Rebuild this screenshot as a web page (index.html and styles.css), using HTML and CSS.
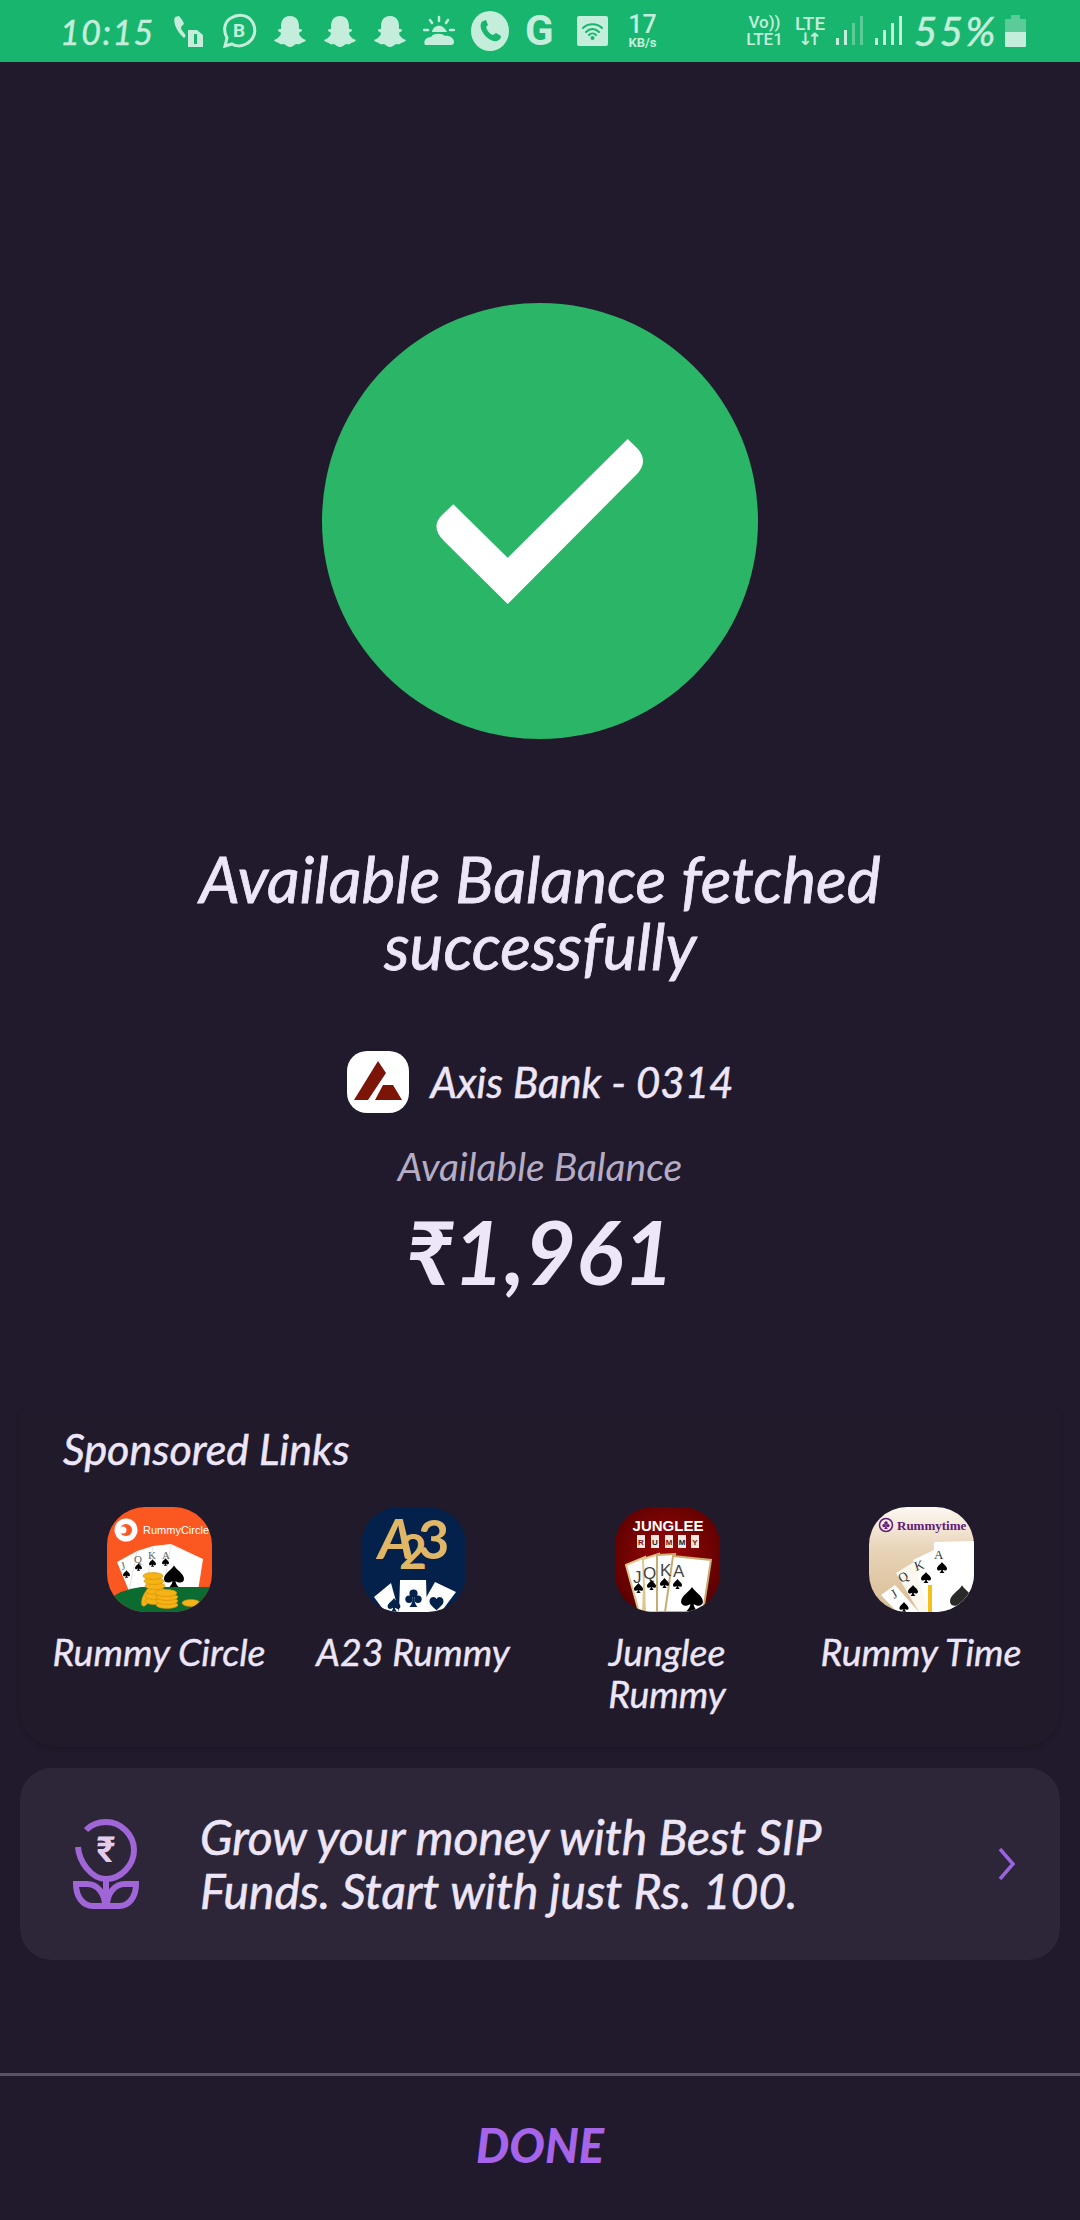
FILE: index.html
```html
<!DOCTYPE html>
<html lang="en">
<head>
<meta charset="utf-8">
<title>Available Balance</title>
<link rel="stylesheet" href="styles.css">
</head>
<body>
<svg class="defs" width="0" height="0" aria-hidden="true">
  <symbol id="spade" viewBox="0 0 20 22"><path d="M10 0C7 5 0 8 0 13.500C0 17 4.500 18.500 8.500 15.500C8.300 18 7 20 5 22H15C13 20 11.700 18 11.500 15.500C15.500 18.500 20 17 20 13.500C20 8 13 5 10 0Z"/></symbol>
  <symbol id="club" viewBox="0 0 20 22"><circle cx="10" cy="5.500" r="5"/><circle cx="4.500" cy="12.500" r="4.500"/><circle cx="15.500" cy="12.500" r="4.500"/><path d="M9 8H11C11 15 12 19 15 22H5C8 19 9 15 9 8Z"/></symbol>
  <symbol id="heart" viewBox="0 0 20 20"><path d="M10 19C5 14 0 11 0 6C0 2 3 0 5.500 0C7.500 0 9 1 10 3C11 1 12.500 0 14.500 0C17 0 20 2 20 6C20 11 15 14 10 19Z"/></symbol>
  <symbol id="ghost" viewBox="0 0 34 32"><path d="M17 1C10 1 8 6 8 12V14C6 14 5 14 5 15C5 17 8 17 8 18C8 21 4 24 1 25C2 27 4 27 6 28C7 30 9 29 11 29C13 30 15 32 17 32C19 32 21 30 23 29C25 29 27 30 28 28C30 27 32 27 33 25C30 24 26 21 26 18C26 17 29 17 29 15C29 14 28 14 26 14V12C26 6 24 1 17 1Z"/></symbol>
</svg>

<div class="page">
  <header class="status">
    <span class="time">10:15</span>
    <svg class="st phone" viewBox="0 0 32 32"><path d="M3 2C1 6 3 13 9 20L12 23C14 22 14 20 12 18C11 16 9 15 9 13C9 11 11 10 12 9C11 6 9 3 7 1Z"/><path d="M16 15H25L31 20V32H16ZM22 19V29H25V19Z" fill-rule="evenodd"/></svg>
    <svg class="st bb" viewBox="0 0 36 36"><path class="st-line" d="M4 33L6 25C2 18 3 9 10 5C18 0 28 2 32 10C36 18 33 27 25 31C20 34 14 33 11 31Z"/><text x="18" y="24" class="bb-t">B</text></svg>
    <svg class="st ghost"><use href="#ghost"/></svg>
    <svg class="st ghost"><use href="#ghost"/></svg>
    <svg class="st ghost"><use href="#ghost"/></svg>
    <svg class="st sun" viewBox="0 0 32 32"><path d="M9 17C10 12 14 10 18 11C21 12 23 15 24 17ZM2 30C0 26 3 22 8 22C10 18 19 18 22 21C26 20 31 23 31 27C31 29 30 30 28 30Z"/><path class="st-line thin" d="M16 2V6M7 5L9 8M25 5L23 8M1 15H5M27 15H31"/></svg>
    <svg class="st wa" viewBox="0 0 38 40"><ellipse cx="19" cy="20" rx="19" ry="20"/><path class="wa-p" d="M12 10C9 12 9 16 11 20C14 26 20 31 26 30C29 29 30 27 30 25L25 22L22 24C19 23 16 20 15 16L17 14L15 9Z"/></svg>
    <span class="g">G</span>
    <svg class="st wifi" viewBox="0 0 31 30"><rect width="31" height="30" rx="2"/><path class="wifi-l" d="M6 12C11 7 20 7 25 12M9 16C13 12 18 12 22 16M12 19C14 17 17 17 19 19"/><circle class="wifi-d" cx="15.500" cy="22" r="2"/></svg>
    <span class="speed"><b>17</b><small>KB/s</small></span>
    <span class="status-right">
      <span class="net vo"><span>Vo))</span><span>LTE1</span></span>
      <span class="net lte"><span>LTE</span><span class="arrows">↓↑</span></span>
      <svg class="bars" viewBox="0 0 28 30"><rect y="22" width="3" height="7"/><rect x="8" y="14" width="3" height="15"/><rect class="dim" x="16" y="7" width="3" height="22"/><rect class="dim" x="24" y="0" width="3" height="29"/></svg>
      <svg class="bars" viewBox="0 0 28 30"><rect y="22" width="3" height="7"/><rect x="8" y="14" width="3" height="15"/><rect x="16" y="7" width="3" height="22"/><rect x="24" y="0" width="3" height="29"/></svg>
      <span class="pct">55%</span>
      <svg class="batt" viewBox="0 0 21 32"><path class="dim" d="M6 0H15V4H20Q21 4 21 5V17H0V5Q0 4 1 4H6Z"/><path d="M0 17H21V31Q21 32 20 32H1Q0 32 0 31Z"/></svg>
    </span>
  </header>

  <main class="main">
    <svg class="check" viewBox="0 0 436 436">
      <circle class="check-bg" cx="218" cy="218" r="218"/>
      <path class="check-mark" d="M305.700 136L316 146Q326 158 316 170L185.700 301L122 238Q108 224 120 212L131.300 201.300L185.700 254.700Z"/>
    </svg>
    <h1 class="title">Available Balance fetched<br>successfully</h1>
    <div class="bank">
      <svg class="bank-logo" viewBox="0 0 62 62">
        <path class="axis" d="M7 49L31 10L39 22L21 49ZM28 49L36 34H46L55 49Z"/>
      </svg>
      <span class="bank-name">Axis Bank - 0314</span>
    </div>
    <p class="bal-label">Available Balance</p>
    <p class="amount">₹1,961</p>

    <section class="links">
      <h2 class="links-title">Sponsored Links</h2>
      <div class="links-grid">
        <a class="app">
          <svg class="app-icon" viewBox="0 0 105 105">
            <rect width="105" height="105" fill="#fb5720"/>
            <circle cx="19" cy="23" r="11.500" fill="#fff"/>
            <circle cx="19" cy="23" r="6" fill="#fb5720"/>
            <circle cx="16" cy="23" r="3.500" fill="#fff"/>
            <text x="36" y="27" class="rc-name">RummyCircle</text>
            <path d="M10 55L30 44L46 39L64 37L96 52L91 84H22Z" fill="#fff"/>
            <path d="M30 44L22 84M46 39L38 84M64 37L56 84" stroke="#e7e2dc" fill="none"/>
            <text x="15" y="63" class="card-l small" fill="#666" transform="rotate(-16 15 63)">J</text>
            <text x="27" y="56" class="card-l small" fill="#666">Q</text>
            <text x="41" y="52" class="card-l small" fill="#666">K</text>
            <text x="55" y="52" class="card-l small" fill="#666">A</text>
            <use href="#spade" x="16" y="63" width="7" height="8"/><use href="#spade" x="28" y="56" width="7" height="8"/><use href="#spade" x="42" y="52" width="7" height="8"/><use href="#spade" x="55" y="51" width="7" height="8"/>
            <use href="#spade" x="57" y="58" width="20" height="23"/>
            <path d="M0 105V94Q14 82 34 80H105V105Z" fill="#0b6b31"/>
            <g fill="#f5b315" stroke="#d48f0a" stroke-width=".6">
              <ellipse cx="40" cy="90" rx="4" ry="10" transform="rotate(25 40 90)"/>
              <ellipse cx="47" cy="94" rx="9" ry="3.500"/><ellipse cx="48" cy="89" rx="10" ry="3.500"/><ellipse cx="49" cy="84" rx="10" ry="3.500"/><ellipse cx="48" cy="79" rx="10" ry="3.500"/><ellipse cx="47" cy="74" rx="10" ry="3.500"/><ellipse cx="46" cy="69" rx="10" ry="3.500"/>
              <ellipse cx="60" cy="98" rx="11" ry="3.500"/><ellipse cx="60" cy="94" rx="11" ry="3.500"/><ellipse cx="60" cy="90" rx="11" ry="3.500"/><ellipse cx="59" cy="86" rx="11" ry="3.500"/>
              <ellipse cx="84" cy="96" rx="9" ry="3.500"/>
            </g>
          </svg>
          <span>Rummy Circle</span>
        </a>
        <a class="app">
          <svg class="app-icon" viewBox="0 0 105 105">
            <rect width="105" height="105" fill="#03214a"/>
            <text x="17" y="52" class="a23" fill="#dfb767">A</text>
            <text x="38" y="62" class="a23 low" fill="#dfb767">2</text>
            <text x="57" y="52" class="a23 mid" fill="#dfb767">3</text>
            <path d="M13 90L30 76L38 105H24Z" fill="#fff"/>
            <path d="M39 73H65L66 105H38Z" fill="#fff"/>
            <path d="M74 75L95 85L80 105H57Z" fill="#fff"/>
            <use href="#spade" x="26" y="91" width="14" height="14" fill="#03214a"/>
            <use href="#club" x="44" y="82" width="17" height="18" fill="#03214a"/>
            <use href="#heart" x="68" y="90" width="15" height="14" fill="#03214a"/>
          </svg>
          <span>A23 Rummy</span>
        </a>
        <a class="app">
          <svg class="app-icon" viewBox="0 0 105 105">
            <defs><radialGradient id="jr" cx=".5" cy=".45" r=".6"><stop offset="0" stop-color="#9c0808"/><stop offset="1" stop-color="#5b0000"/></radialGradient></defs>
            <rect width="105" height="105" fill="url(#jr)"/>
            <text x="53" y="24" class="jr-name">JUNGLEE</text>
            <rect x="22" y="28" width="8" height="13" fill="#f3e7e0"/><rect x="36" y="28" width="8" height="13" fill="#f3e7e0"/><rect x="50" y="28" width="8" height="13" fill="#f3e7e0"/><rect x="63" y="28" width="8" height="13" fill="#f3e7e0"/><rect x="76" y="28" width="8" height="13" fill="#f3e7e0"/>
            <text x="26" y="38" class="jr-l" fill="#8a0e0e">R</text><text x="40" y="38" class="jr-l" fill="#222">U</text><text x="54" y="38" class="jr-l" fill="#8a0e0e">M</text><text x="67" y="38" class="jr-l" fill="#222">M</text><text x="80" y="38" class="jr-l" fill="#8a0e0e">Y</text>
            <path d="M11 58L30 50L28 105H24Z" fill="#fff" stroke="#e0c68c" stroke-width="2"/>
            <path d="M28 52L44 47L42 105H30Z" fill="#fff" stroke="#e0c68c" stroke-width="2"/>
            <path d="M42 48L60 47L52 105H42Z" fill="#fff" stroke="#c8ad70" stroke-width="2"/>
            <path d="M58 49L96 53L88 105H50Z" fill="#fff" stroke="#c8ad70" stroke-width="2"/>
            <text x="18" y="76" class="card-l jr-c" fill="#444">J</text>
            <text x="28" y="72" class="card-l jr-c" fill="#444">Q</text>
            <text x="45" y="69" class="card-l jr-c" fill="#444">K</text>
            <text x="58" y="70" class="card-l jr-c" fill="#444">A</text>
            <use href="#spade" x="19" y="76" width="9" height="10"/><use href="#spade" x="32" y="73" width="9" height="10"/><use href="#spade" x="45" y="71" width="9" height="10"/><use href="#spade" x="58" y="72" width="9" height="10"/>
            <use href="#spade" x="66" y="80" width="22" height="24"/>
          </svg>
          <span>Junglee Rummy</span>
        </a>
        <a class="app">
          <svg class="app-icon" viewBox="0 0 105 105">
            <defs><linearGradient id="rt" x1="0" y1="0" x2="0" y2="1"><stop offset="0" stop-color="#fdf8f2"/><stop offset=".4" stop-color="#e8d4b8"/><stop offset="1" stop-color="#d9bc94"/></linearGradient></defs>
            <rect width="105" height="105" fill="url(#rt)"/>
            <circle cx="17" cy="18" r="6.500" fill="none" stroke="#5f1a7c" stroke-width="1.500"/><use href="#club" x="13" y="14" width="8" height="8" fill="#5f1a7c"/>
            <text x="28" y="23" class="rt-name">Rummytime</text>
            <path d="M12 88L26 78L50 105H28Z" fill="#fff"/>
            <path d="M27 66L45 55L70 105H50Z" fill="#fdf8ef"/>
            <path d="M44 53L65 43L65 105H60Z" fill="#fff"/>
            <path d="M65 35L105 34V105H63Z" fill="#fff"/>
            <path d="M59 78L63 78L63 105H59Z" fill="#f2c21b"/>
            <text x="25" y="92" class="card-l" fill="#333" transform="rotate(-30 25 92)">J</text>
            <text x="32" y="76" class="card-l" fill="#333" transform="rotate(-28 32 76)">Q</text>
            <text x="47" y="64" class="card-l" fill="#333" transform="rotate(-18 47 64)">K</text>
            <text x="65" y="52" class="card-l" fill="#333">A</text>
            <use href="#spade" x="30" y="95" width="10" height="10"/><use href="#spade" x="39" y="78" width="10" height="11"/><use href="#spade" x="52" y="65" width="10" height="11"/><use href="#spade" x="68" y="55" width="10" height="11"/>
            <use href="#spade" x="81" y="78" width="24" height="27" fill="#2a2a2a"/>
          </svg>
          <span>Rummy Time</span>
        </a>
      </div>
    </section>

    <a class="banner">
      <svg class="plant" viewBox="0 0 66 90">
        <path class="plant-l" d="M5 28C6 42 18 60 33 60C48 60 61 46 61 31C61 16 48 3 33 3C25 3 18 6 13 11"/>
        <path class="plant-l" d="M33 60V88M3 65H14C24 65 32 74 32 87H20C10 87 3 78 3 65ZM63 65H52C42 65 34 74 34 87H46C56 87 63 78 63 65Z"/>
        <text x="33" y="43" class="rupee">₹</text>
      </svg>
      <span class="banner-text">Grow your money with Best SIP<br>Funds. Start with just Rs. 100.</span>
      <svg class="chev" viewBox="0 0 18 32"><path d="M2 1L15 16L2 31"/></svg>
    </a>
  </main>

  <footer class="footer"><span class="done">DONE</span></footer>
</div>
</body>
</html>
```
FILE: styles.css
```css
* { box-sizing: border-box; }
html, body { margin: 0; padding: 0; }
body {
  background: #211a2c;
  color: #ede6f8;
  font-family: Lato, "Open Sans", sans-serif;
  font-style: italic;
}
.defs { position: absolute; }
.page { width: 1080px; height: 2220px; display: flex; flex-direction: column; overflow: hidden; }

/* status bar */
.status {
  height: 62px;
  flex: none;
  background: #18b56e;
  color: #c4eedb;
  fill: #c4eedb;
  display: flex;
  align-items: center;
  gap: 16px;
  padding: 0 54px 0 60px;
}
.time { width: 92px; margin-right: 4px; font-size: 34px; letter-spacing: 1.500px; white-space: nowrap; -webkit-text-stroke: .5px #c4eedb; }
.st { flex: none; display: block; }
.phone { width: 32px; height: 32px; }
.bb { width: 36px; height: 36px; margin-left: 1px; }
.st-line { fill: none; stroke: #c4eedb; stroke-width: 3; }
.st-line.thin { stroke-width: 2.500; stroke-linecap: round; }
.bb-t { font: 700 19px Roboto, sans-serif; text-anchor: middle; fill: #c4eedb; }
.ghost { width: 34px; height: 32px; }
.sun { width: 32px; height: 32px; }
.wa { width: 38px; height: 40px; }
.wa-p { fill: #18b56e; }
.g { width: 32px; margin-right: 4px; font: 700 42px/1 Roboto, sans-serif; }
.wifi { width: 31px; height: 30px; }
.wifi-l { fill: none; stroke: #18b56e; stroke-width: 2; stroke-linecap: round; }
.wifi-d { fill: #18b56e; }
.speed { display: flex; flex-direction: column; align-items: center; width: 37px; font-family: Roboto, sans-serif; font-style: normal; }
.speed b { font-size: 25px; line-height: 23px; font-weight: 500; }
.speed small { font-size: 13px; line-height: 13px; font-weight: 700; }
.status-right { margin-left: auto; display: flex; align-items: center; gap: 11px; }
.net { display: flex; flex-direction: column; align-items: center; font: 500 17px/17px Roboto, sans-serif; white-space: nowrap; }
.vo { width: 39px; }
.lte { width: 30px; }
.lte span:first-child { font-size: 19px; }
.arrows { font: 700 17px/15px "DejaVu Sans", sans-serif; letter-spacing: -5px; padding-right: 5px; }
.bars { width: 28px; height: 30px; display: block; }
.dim { opacity: .4; }
.pct { width: 80px; font-size: 40px; letter-spacing: 2.500px; white-space: nowrap; -webkit-text-stroke: .6px #c4eedb; }
.batt { width: 21px; height: 32px; display: block; }

/* result */
.main { flex: 1; display: flex; flex-direction: column; align-items: center; padding-top: 241px; }
.check { width: 436px; height: 436px; display: block; flex: none; }
.check-bg { fill: #2ab666; }
.check-mark { fill: #fff; }
.title { margin: 106px 0 0; font-size: 64px; line-height: 67px; font-weight: 400; text-align: center; -webkit-text-stroke: .8px #ede6f8; }
.bank { display: flex; align-items: center; gap: 22px; margin-top: 72px; height: 62px; font-size: 42px; }
.bank-name { -webkit-text-stroke: .5px #ede6f8; }
.bank-logo { width: 62px; height: 62px; background: #fff; border-radius: 20px; display: block; }
.axis { fill: #7c1508; }
.bal-label { margin: 33px 0 0; font-size: 39px; line-height: 40px; color: #b5adc6; }
.amount { margin: 15px 0 0; height: 100px; font-size: 88px; line-height: 100px; font-weight: 700; }

/* sponsored */
.links { width: 1040px; margin-top: 109px; height: 337px; padding: 14px 12px 0; border-radius: 0 0 36px 36px; background: #201a2b; box-shadow: 0 2px 4px rgba(0, 0, 0, .18); }
.links-title { margin: 0 0 33px 31px; font-size: 43px; line-height: 50px; font-weight: 400; -webkit-text-stroke: .5px #ede6f8; }
.links-grid { display: grid; grid-template-columns: repeat(4, minmax(0, 1fr)); }
.app { display: flex; flex-direction: column; align-items: center; gap: 19px; min-width: 0; text-align: center; font-size: 37.500px; line-height: 42px; }
.app span { width: 200px; -webkit-text-stroke: .4px #ede6f8; }
.app:nth-child(1) span, .app:nth-child(4) span { width: 250px; }
.app-icon { width: 105px; height: 105px; border-radius: 38px; display: block; flex: none; font-style: normal; }
.rc-name { font: 400 11px "Liberation Sans", sans-serif; fill: #fff; }
.card-l { font: 400 13px "Liberation Serif", serif; }
.card-l.small { font-size: 11px; }
.card-l.jr-c { font: 400 17px "Liberation Sans", sans-serif; }
.a23 { font: 700 56px Lato, sans-serif; font-style: italic; }
.a23.mid { font-size: 54px; font-style: normal; }
.a23.low { font-size: 48px; font-style: normal; }
.jr-name { font: 700 15px "Liberation Sans", sans-serif; fill: #fff; text-anchor: middle; }
.jr-l { font: 700 8px "Liberation Sans", sans-serif; text-anchor: middle; }
.rt-name { font: 700 13px "Liberation Serif", serif; fill: #5f1a7c; }

/* banner */
.banner { width: 1040px; height: 192px; margin-top: 21px; padding: 0 44px 0 53px; border-radius: 32px; background: #2d2538; display: flex; align-items: center; flex: none; }
.plant { width: 66px; height: 90px; flex: none; display: block; }
.plant-l { fill: none; stroke: #a066d8; stroke-width: 6; }
.rupee { font: 700 36px Roboto, "DejaVu Sans", sans-serif; text-anchor: middle; fill: #e3cdee; }
.banner-text { flex: 1; margin-left: 61px; font-size: 48px; line-height: 54px; -webkit-text-stroke: .6px #ede6f8; }
.chev { width: 18px; height: 32px; flex: none; fill: none; stroke: #9a63e0; stroke-width: 3.500; }

/* footer */
.footer { flex: none; height: 147px; padding-bottom: 6px; border-top: 3px solid #5b5266; display: flex; justify-content: center; align-items: center; }
.done { font-size: 47px; font-weight: 900; color: #a564ea; }
```
